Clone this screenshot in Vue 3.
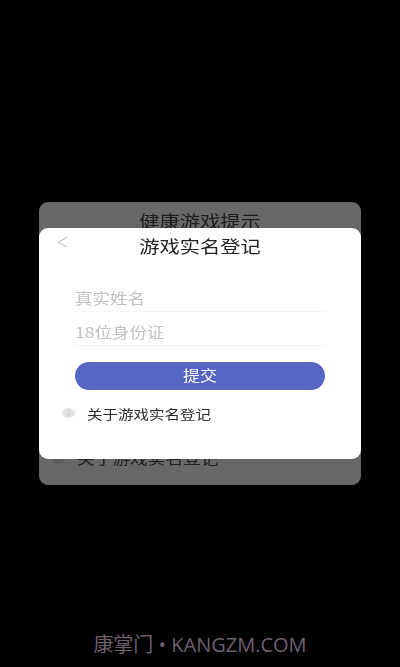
<script setup>
const fields = ['真实姓名', '18位身份证']
</script>

<template>
  <main class="page">
    <section class="stack">
      <div class="under">
        <h2 class="under-title"><span class="squeeze">健康游戏提示</span></h2>
        <p class="under-about"><span class="under-dot"></span><span class="squeeze">关于游戏实名登记</span></p>
      </div>
      <div class="dialog">
        <svg class="back" viewBox="0 0 12 12" width="12" height="12" aria-hidden="true">
          <path d="M10 1 L1.5 6.5 L10 11" fill="none" stroke="#c4c4c4" stroke-width="1.1" />
        </svg>
        <h1 class="title"><span class="squeeze">游戏实名登记</span></h1>
        <div class="field" v-for="f in fields" :key="f"><span class="squeeze">{{ f }}</span></div>
        <button class="submit" type="button"><span class="squeeze">提交</span></button>
        <p class="about">
          <span class="info">i</span>
          <span class="squeeze">关于游戏实名登记</span>
        </p>
      </div>
    </section>
    <footer class="mark">康掌门 • KANGZM.COM</footer>
  </main>
</template>

<style scoped>
.page {
  width: 400px;
  height: 667px;
  background: #000;
  display: flex;
  flex-direction: column;
  align-items: center;
  padding-top: 202px;
  box-sizing: border-box;
  font-family: "Noto Sans CJK SC", "Noto Sans", sans-serif;
}
.squeeze {
  display: inline-block;
  transform: translateY(-1.5px) scaleY(0.84);
}
.stack {
  position: relative;
  width: 322px;
  height: 283px;
  filter: blur(0.3px);
}
.under {
  height: 283px;
  background: #686868;
  border-radius: 9px;
  display: flex;
  flex-direction: column;
  justify-content: space-between;
  align-items: center;
  box-sizing: border-box;
  padding: 8px 0 16px;
}
.under-title {
  margin: 0;
  font-size: 20.3px;
  line-height: 24px;
  font-weight: 400;
  color: #1c1c1c;
}
.under-about {
  margin: 0;
  width: 100%;
  box-sizing: border-box;
  padding-left: 13px;
  display: flex;
  align-items: center;
  gap: 12px;
  font-size: 17.7px;
  line-height: 20px;
  color: #1e1e1e;
}
.under-dot {
  width: 13px;
  height: 10px;
  border-radius: 50%;
  background: #5c5c5c;
}
.dialog {
  position: absolute;
  left: 0;
  right: 0;
  top: 26px;
  height: 231px;
  background: #fff;
  border-radius: 9px;
  box-sizing: border-box;
  padding: 0 36px;
}
.back {
  position: absolute;
  left: 18px;
  top: 8px;
}
.title {
  margin: 0 0 19px;
  padding-top: 7px;
  font-size: 20.3px;
  line-height: 24px;
  font-weight: 400;
  color: #222;
  text-align: center;
}
.field {
  height: 34px;
  display: flex;
  align-items: flex-end;
  padding-bottom: 1px;
  line-height: 20px;
  box-sizing: border-box;
  border-bottom: 1px solid #f5f5f5;
  font-size: 17.5px;
  color: #c0c0c0;
}
.submit {
  display: block;
  width: 100%;
  height: 28px;
  margin-top: 16px;
  padding: 1px 0 0;
  border: 0;
  border-radius: 14px;
  background: #5666c2;
  color: #fff;
  font: inherit;
  font-size: 17px;
  line-height: 27px;
}
.about {
  margin: 16px 0 0 -13px;
  display: flex;
  align-items: center;
  gap: 12px;
  font-size: 15.5px;
  line-height: 18px;
  color: #2a2a2a;
}
.info {
  width: 13px;
  height: 10px;
  margin-top: -4px;
  border-radius: 50%;
  background: #e2e2e2;
  color: #bdbdbd;
  font-size: 7px;
  line-height: 10px;
  text-align: center;
}
.mark {
  margin-top: auto;
  height: 44px;
  line-height: 44px;
  font-size: 20px;
  color: #6e5f6e;
  font-family: "Open Sans", "Noto Sans CJK SC", sans-serif;
}
</style>
